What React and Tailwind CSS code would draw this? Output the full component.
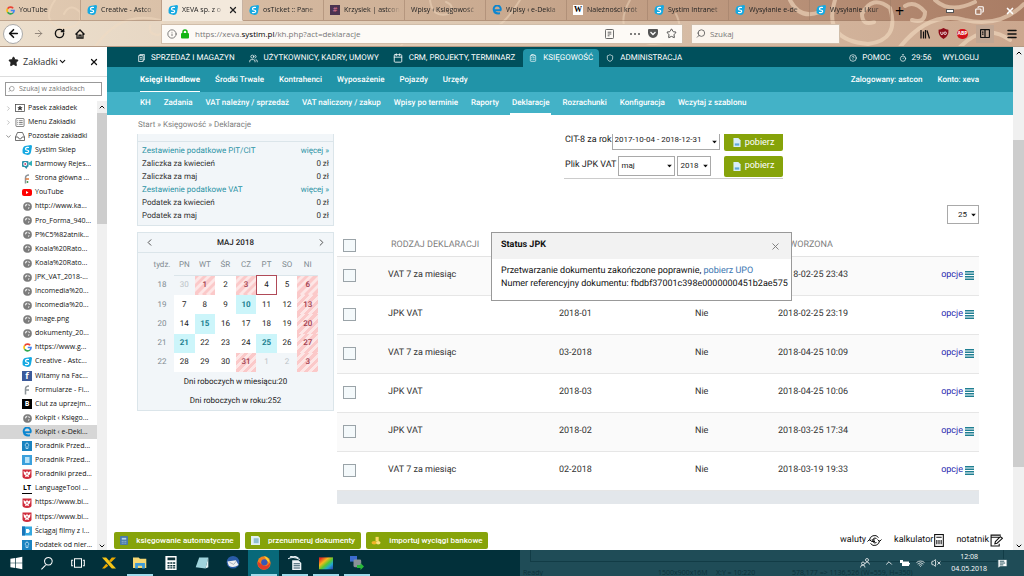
import {
  ArrowLeft, ArrowRight, Calendar, ChevronDown, ChevronLeft, ChevronRight, ChevronUp, CircleHelp, ClipboardList,
  Copy, Info, Menu, MessageSquareText, RotateCw, Search, Shield, Star, Timer, Users, VolumeX, Wifi, X,
} from 'lucide-react'

const tabs = [
  { label: 'YouTube', icon: 'google' },
  { label: 'Creative - Astco', icon: 'systim' },
  { label: 'XEVA sp. z o', icon: 'systim', active: true },
  { label: 'osTicket :: Pane', icon: 'systim' },
  { label: 'Krzysiek | astcon', icon: 'slack' },
  { label: 'Wpisy ‹ Księgowość' },
  { label: 'Wpisy ‹ e-Dekla', icon: 'edge' },
  { label: 'Należności krót', icon: 'wiki' },
  { label: 'Systim Intranet', icon: 'systim' },
  { label: 'Wysyłanie e-de', icon: 'systim' },
  { label: 'Wysyłanie i kur', icon: 'systim' },
]

const bookmarks = [
  ['systim', 'Systim Sklep'],
  ['camera', 'Darmowy Rejes...'],
  ['fcolor', 'Strona główna ...'],
  ['youtube', 'YouTube'],
  ['globe', 'http://www.ka...'],
  ['globe', 'Pro_Forma_940...'],
  ['globe', 'P%C5%82atnik...'],
  ['globe', 'Koala%20Rato...'],
  ['globe', 'Koala%20Rato...'],
  ['globe', 'JPK_VAT_2018-...'],
  ['globe', 'Incomedia%20...'],
  ['globe', 'Incomedia%20...'],
  ['globe', 'image.png'],
  ['globe', 'dokumenty_20...'],
  ['google', 'https://www.g...'],
  ['systim', 'Creative - Astc...'],
  ['facebook', 'Witamy na Fac...'],
  ['fgray', 'Formularze - Fi...'],
  ['bold', 'Ciut za uprzejm...'],
  ['globe', 'Kokpit ‹ Księgo...'],
  ['edge', 'Kokpit ‹ e-Dekl...'],
  ['bulb', 'Poradnik Przed...'],
  ['book', 'Poradnik Przed...'],
  ['eagle', 'Poradniki przed...'],
  ['lt', 'LanguageTool ...'],
  ['eagle', 'https://www.bi...'],
  ['eagle', 'https://www.bi...'],
  ['film', 'Ściągaj filmy z I...'],
  ['bulb', 'Podatek od nier...'],
]

const subNav = ['Środki Trwałe', 'Kontrahenci', 'Wyposażenie', 'Pojazdy', 'Urzędy']

const thirdNav = [
  'KH', 'Zadania', 'VAT należny / sprzedaż', 'VAT naliczony / zakup', 'Wpisy po terminie', 'Raporty', 'Deklaracje',
  'Rozrachunki', 'Konfiguracja', 'Wczytaj z szablonu',
]

const summary = [
  ['Zestawienie podatkowe PIT/CIT', 'więcej »', true],
  ['Zaliczka za kwiecień', '0 zł'],
  ['Zaliczka za maj', '0 zł'],
  ['Zestawienie podatkowe VAT', 'więcej »', true],
  ['Podatek za kwiecień', '0 zł'],
  ['Podatek za maj', '0 zł'],
]

const weekdays = ['PN', 'WT', 'ŚR', 'CZ', 'PT', 'SO', 'NI']

// o = other month, h = holiday, d = deadline, t = today
const weeks = [
  [18, ['30', 'o'], ['1', 'h'], ['2'], ['3', 'h'], ['4', 't'], ['5'], ['6', 'h']],
  [19, ['7'], ['8'], ['9'], ['10', 'd'], ['11'], ['12'], ['13', 'h']],
  [20, ['14'], ['15', 'd'], ['16'], ['17'], ['18'], ['19'], ['20', 'h']],
  [21, ['21', 'd'], ['22'], ['23'], ['24'], ['25', 'd'], ['26'], ['27', 'h']],
  [22, ['28'], ['29'], ['30'], ['31', 'h'], ['1', 'o'], ['2', 'o'], ['3', 'h']],
]

const dayStyles = {
  o: 'text-[#bcc3c7]',
  h: 'font-medium text-[#a04050] bg-[repeating-linear-gradient(135deg,#fbc9c9_0px,#fbc9c9_3px,#fde6e6_3px,#fde6e6_6px)]',
  d: 'bg-[#ccf5fa] font-bold text-[#1c8090]',
  t: 'bg-white outline outline-1 -outline-offset-1 outline-[#b04a58]',
}

const declarations = [
  ['VAT 7 za miesiąc', '', '', '2018-02-25 23:43'],
  ['JPK VAT', '2018-01', 'Nie', '2018-02-25 23:19'],
  ['VAT 7 za miesiąc', '03-2018', 'Nie', '2018-04-25 10:09'],
  ['JPK VAT', '2018-03', 'Nie', '2018-04-25 10:06'],
  ['JPK VAT', '2018-02', 'Nie', '2018-03-25 17:34'],
  ['VAT 7 za miesiąc', '02-2018', 'Nie', '2018-03-19 19:33'],
]

function SiteIcon({ name }) {
  const box = 'flex h-[10px] w-[10px] shrink-0 items-center justify-center'
  switch (name) {
    case 'systim':
      return (
        <svg viewBox="0 0 20 20" className="h-[10px] w-[10px] shrink-0">
          <path d="M6 2 L18 0 Q20 0 20 3 L18 14 Q17 20 11 20 L4 18 Q0 16 1 10 Q2 3 6 2Z" fill="#15a9e2" />
          <path d="M14 5 Q7 4 7 8 Q7 10 11 10.500 Q14 11 13 13.500 Q12 16 6 15" fill="none" stroke="#fff" strokeWidth="2.400" />
        </svg>
      )
    case 'google':
      return (
        <svg viewBox="0 0 20 20" className="h-[9px] w-[9px] shrink-0" fill="none" strokeWidth="3.500">
          <path d="M16 5 A8 8 0 0 0 3.500 6" stroke="#ea4335" />
          <path d="M3.500 6 A8 8 0 0 0 3.500 14" stroke="#fbbc05" />
          <path d="M3.500 14 A8 8 0 0 0 15.500 15.500" stroke="#34a853" />
          <path d="M15.500 15.500 A8 8 0 0 0 18 10 H10.500" stroke="#4285f4" />
        </svg>
      )
    case 'edge':
      return (
        <svg viewBox="0 0 20 20" className="h-[10px] w-[10px] shrink-0" fill="none" stroke="#0c86d0" strokeWidth="4">
          <path d="M4 10.500 H17 A7 7 0 1 0 4 11 Q5 18 16 16.500" />
        </svg>
      )
    case 'globe':
      return (
        <svg viewBox="0 0 20 20" className="h-[9px] w-[9px] shrink-0">
          <circle cx="10" cy="10" r="9" fill="#7c7c7c" stroke="#666" />
          <path d="M4 8 Q6 3 10 4 L9 7 L6 9 L7 12Z M12 4 L16 7 L15 9 L12 8Z M11 12 L15 12 L12 16Z" fill="#e8e8e8" />
        </svg>
      )
    case 'youtube':
      return (
        <svg viewBox="0 0 20 14" className="h-[7px] w-[10px] shrink-0">
          <rect width="20" height="14" rx="4" fill="#f00" />
          <path d="M8 4 L13 7 L8 10Z" fill="#fff" />
        </svg>
      )
    case 'camera':
      return (
        <svg viewBox="0 0 20 18" className="h-[9px] w-[10px] shrink-0">
          <rect y="2" width="13" height="12" rx="2" fill="#2b8fa8" />
          <path d="M13 6 L20 1 V12 L13 9Z" fill="#36b0b8" />
          <circle cx="6.500" cy="8" r="4" fill="#fff" />
          <circle cx="6.500" cy="8" r="2" fill="#c4446c" />
          <path d="M5 14 L9 18 L11 14Z" fill="#2b8fa8" />
        </svg>
      )
    case 'fcolor':
    case 'fgray':
      return (
        <svg viewBox="0 0 20 20" className="h-[10px] w-[10px] shrink-0" fill="none" strokeWidth="3">
          <path d="M7 19 V8 Q7 2 14 2" stroke="#8d9499" />
          <path d="M7 10 H14" stroke={name === 'fcolor' ? '#e07a3c' : '#8d9499'} />
          {name === 'fcolor' && <path d="M11 18 V14" stroke="#4e9a58" />}
        </svg>
      )
    case 'slack':
      return <span className={`${box} bg-[#4b3350] text-[7px] text-[#e07a9a]`}>#</span>
    case 'wiki':
      return <span className={`${box} bg-white font-['Liberation_Serif',serif] text-[8px] font-bold text-black`}>W</span>
    case 'facebook':
      return <span className={`${box} bg-[#3b5a9a] text-[9px] font-bold leading-[10px] text-white`}>f</span>
    case 'bold':
      return <span className={`${box} bg-black text-[7px] font-bold text-white`}>B</span>
    case 'lt':
      return <span className={`${box} border-b border-black text-[7px] font-bold text-black`}>LT</span>
    case 'bulb':
      return (
        <svg viewBox="0 0 20 20" className="h-[10px] w-[10px] shrink-0">
          <rect width="20" height="20" fill="#1a83c0" />
          <path d="M10 4 A4 4 0 0 1 12 11 V15 H8 V11 A4 4 0 0 1 10 4Z" fill="none" stroke="#d6effc" strokeWidth="1.500" />
        </svg>
      )
    case 'book':
      return (
        <svg viewBox="0 0 20 20" className="h-[10px] w-[10px] shrink-0">
          <rect width="20" height="20" fill="#3ba0dc" />
          <rect x="6" y="4" width="9" height="12" fill="#b8e2f8" />
        </svg>
      )
    case 'film':
      return (
        <svg viewBox="0 0 20 20" className="h-[10px] w-[10px] shrink-0">
          <rect y="1" width="20" height="18" fill="#35a8e0" />
          <path d="M0 1 H6 V19 H0Z" fill="#1b74b8" />
          <path d="M8 6 H13 L16 10 L13 14 H8Z" fill="#fff" />
        </svg>
      )
    default:
      return (
        <svg viewBox="0 0 20 20" className="h-[10px] w-[10px] shrink-0">
          <path d="M1 1 H19 V15 Q19 19 10 20 Q1 19 1 15Z" fill="#d02c3c" />
          <path d="M10 3 L12 7 L17 4 L16 11 L13 12 L14 16 L10 15 L6 16 L7 12 L4 11 L3 4 L8 7Z" fill="#fff" />
          <path d="M9 8 H11 V12 H9Z" fill="#d02c3c" />
        </svg>
      )
  }
}

function ThemeSwirls() {
  return (
    <svg
      viewBox="0 0 1024 47"
      preserveAspectRatio="xMaxYMin slice"
      className="pointer-events-none absolute inset-0 h-full w-full"
      fill="none"
      stroke="#f3dcc2"
      strokeLinecap="round"
    >
      <g strokeWidth="2" opacity="0.450">
        <path d="M55 0 Q40 22 62 28 Q84 28 80 12 Q70 2 64 14" />
        <path d="M95 47 Q120 10 160 20 Q172 30 158 35 Q148 34 150 26" />
        <path d="M430 0 Q432 18 448 14 Q456 6 446 2" />
        <path d="M400 47 Q420 20 450 30 Q490 50 520 0" />
        <path d="M630 0 Q610 35 650 44 Q690 44 676 14" />
      </g>
      <g strokeWidth="4" opacity="0.600">
        <path d="M835 0 Q822 40 868 44 Q900 40 890 8 Q872 -6 862 14 Q862 26 874 22" />
        <path d="M790 0 Q800 20 820 12 M900 47 Q930 10 965 20 Q1000 28 1024 4" />
        <path d="M905 6 Q915 0 925 12 Q925 24 912 20" />
        <path d="M960 47 Q985 22 1010 40" />
        <path d="M935 0 Q950 14 975 2" />
      </g>
    </svg>
  )
}

function BrowserChrome() {
  return (
    <header className="relative bg-linear-to-r from-[#ecdfcd] via-[#dcc6b0] to-[#cba78e] font-['Open_Sans',sans-serif] text-[8px] text-[#222]">
      <div className="absolute inset-x-0 top-0 h-[21px] bg-linear-to-r from-[#e2ccb4] via-[#c9a98f] to-[#a97c64]" />
      <ThemeSwirls />
      <div className="relative flex h-[21px]">
        {tabs.map((tab) => (
          <button
            key={tab.label}
            className={`flex w-[81px] items-center gap-1 border-r border-b border-[#9c7c66]/50 pl-[6px] pr-1 text-left text-[7px] ${tab.active ? 'border-b-transparent bg-[#f3e9dc]' : ''}`}
          >
            {tab.icon && <SiteIcon name={tab.icon} />}
            <span className="min-w-0 flex-1 whitespace-nowrap [mask-image:linear-gradient(to_right,black_75%,transparent)]">
              {tab.label}
            </span>
            {tab.active && <X size={10} strokeWidth={3} className="shrink-0" />}
          </button>
        ))}
        <button aria-label="Nowa karta" className="px-1 text-[16px] leading-[20px] text-black">+</button>
        <div className="ml-auto flex items-center gap-[21px] pr-[9px] text-white">
          <span className="h-[4px] w-[8px] border border-[#555] bg-white" />
          <Copy size={9} strokeWidth={3} className="-scale-x-100" />
          <X size={10} strokeWidth={4} />
        </div>
      </div>
      <div className="relative flex h-[26px] items-center border-b border-[#b59a84]">
        <div className="flex w-[161px] items-center gap-[10px] pl-[3px] text-[#111]">
          <button aria-label="Wstecz" className="flex h-5 w-5 items-center justify-center rounded-full border border-[#aaa] bg-white">
            <ArrowLeft size={13} strokeWidth={3} />
          </button>
          <ArrowRight size={11} strokeWidth={2} className="text-[#8a7f74]" />
          <RotateCw size={11} strokeWidth={3} />
          <svg viewBox="0 0 20 20" className="h-[10px] w-[10px]" fill="none" stroke="currentColor" strokeWidth="2.500">
            <path d="M1 11 L10 2 L19 11 M4 9 V18 H16 V9 M8 18 V12 H12 V18" />
          </svg>
        </div>
        <div className="flex h-5 min-w-0 flex-1 items-center gap-1 border border-[#d0bda9] bg-[#fdfaf6] px-[5px]">
          <Info size={10} className="text-[#666]" />
          <svg viewBox="0 0 16 20" className="h-[10px] w-[8px]">
            <rect y="8" width="16" height="11" rx="2" fill="#12b512" />
            <path d="M4 9 V6 Q4 2 8 2 Q12 2 12 6 V9" fill="none" stroke="#12b512" strokeWidth="3" />
          </svg>
          <p className="ml-[2px] flex-1 text-[#777]">
            https://xeva.<span className="text-black">systim.pl</span>/kh.php?act=deklaracje
          </p>
          <svg viewBox="0 0 20 22" className="h-[10px] w-[9px]" fill="none" stroke="#555" strokeWidth="2">
            <rect x="1" y="1" width="18" height="20" rx="2" />
            <path d="M6 7 H14 M6 11 H14 M6 15 H10" />
          </svg>
          <span className="ml-3 flex gap-[2px]">
            <i className="h-[2px] w-[2px] rounded-full bg-[#555]" />
            <i className="h-[2px] w-[2px] rounded-full bg-[#555]" />
            <i className="h-[2px] w-[2px] rounded-full bg-[#555]" />
          </span>
          <svg viewBox="0 0 20 18" className="ml-1 h-[9px] w-[10px]">
            <path d="M2 0 H18 Q20 0 20 2 V8 Q19 17 10 18 Q1 17 0 8 V2 Q0 0 2 0Z" fill="#555" />
            <path d="M5 6 L10 11 L15 6" fill="none" stroke="#fff" strokeWidth="2.500" />
          </svg>
          <Star size={11} className="ml-1 text-[#444]" />
        </div>
        <div className="ml-2 flex h-5 w-[149px] items-center gap-1 border border-[#d0bda9] bg-[#fbf5ee] px-1">
          <Search size={11} className="-scale-x-100 text-[#555]" />
          <input aria-label="Szukaj" placeholder="Szukaj" className="w-full bg-transparent outline-none placeholder:text-[#777]" />
        </div>
        <div className="flex w-[184px] items-center justify-end gap-2 pr-[6px] text-[#111]">
          <svg viewBox="0 0 20 20" className="h-[10px] w-[10px]" fill="none" stroke="currentColor" strokeWidth="2.500">
            <path d="M2 2 V19 M7 5 V19 M11 2 V19 M14 3 L19 19" />
          </svg>
          <svg viewBox="0 0 20 20" className="h-[11px] w-[11px]">
            <path d="M10 0 Q15 3 19 3 Q20 15 10 20 Q0 15 1 3 Q5 3 10 0Z" fill="#8c0c18" />
            <path d="M5 7 V10 Q5 12 7 12 Q9 12 9 10 V7" fill="none" stroke="#fff" strokeWidth="1.500" />
            <circle cx="13" cy="9.500" r="2.300" fill="none" stroke="#fff" strokeWidth="1.500" />
          </svg>
          <span className="flex h-[10px] w-[11px] items-center justify-center rounded-full bg-[#d3121a] text-[5px] font-bold text-white">
            ABP
          </span>
          <span className="flex h-[18px] w-[18px] items-center justify-center bg-[#c0a693]">
            <svg viewBox="0 0 20 18" className="h-[9px] w-[10px]" fill="none" stroke="currentColor" strokeWidth="2.500">
              <rect x="1" y="1" width="18" height="16" rx="2" />
              <path d="M10 1 V17 M4 6 H7 M4 10 H7" />
            </svg>
          </span>
          <Menu size={12} strokeWidth={3} className="ml-1" />
        </div>
      </div>
    </header>
  )
}

function Sidebar() {
  const folder = 'flex flex-1 items-center gap-[3px] whitespace-nowrap pl-[5px]'
  return (
    <aside className="flex w-[107px] shrink-0 flex-col bg-white font-['Open_Sans',sans-serif] text-[7px] text-[#111]">
      <div className="flex h-[30px] items-center border-b border-[#ddd] px-2">
        <Star size={11} fill="#222" className="text-[#222]" />
        <span className="ml-1 text-[9px] text-[#333]">Zakładki</span>
        <ChevronDown size={9} strokeWidth={3} />
        <button aria-label="Zamknij" className="ml-auto">
          <X size={10} strokeWidth={3} />
        </button>
      </div>
      <div className="mx-[5px] mt-[5px] mb-[5px] flex h-[14px] items-center gap-1 border border-[#999] px-[2px]">
        <Search size={8} className="-scale-x-100 text-[#777]" />
        <input
          aria-label="Szukaj w zakładkach"
          placeholder="Szukaj w zakładkach"
          className="w-full outline-none placeholder:text-[#777]"
        />
      </div>
      <div className="flex flex-1">
        <ul className="-mb-[2px] flex min-w-0 flex-1 flex-col">
          <li className={folder}>
            <ChevronRight size={7} className="text-[#999]" />
            <svg viewBox="0 0 20 16" className="h-[8px] w-[10px]" fill="none" stroke="#444" strokeWidth="1.500">
              <rect x="1" y="1" width="18" height="14" />
              <path d="M10 4 L11 7 H14 L12 9 L13 12 L10 10 L7 12 L8 9 L6 7 H9Z" fill="#222" />
            </svg>
            Pasek zakładek
          </li>
          <li className={folder}>
            <ChevronRight size={7} className="text-[#999]" />
            <svg viewBox="0 0 20 20" className="h-[9px] w-[10px]" fill="none" stroke="#444" strokeWidth="1.500">
              <rect x="1" y="1" width="18" height="18" rx="2" />
              <path d="M4 6 H6 M8 6 H16 M4 10 H6 M8 10 H16 M4 14 H6 M8 14 H16" />
            </svg>
            Menu Zakładki
          </li>
          <li className={folder}>
            <ChevronDown size={7} className="text-[#444]" />
            <svg viewBox="0 0 20 18" className="h-[9px] w-[10px]" fill="none" stroke="#444" strokeWidth="1.500">
              <path d="M5 1 H15 L19 10 V17 H1 V10Z M1 10 H6 Q7 14 10 14 Q13 14 14 10 H19" />
            </svg>
            Pozostałe zakładki
          </li>
          {bookmarks.map(([icon, label], i) => (
            <li key={i} className={`flex flex-1 items-center pl-[22px] ${icon === 'edge' ? 'bg-[#d6d6d6]' : ''}`}>
              <a href="#" className="flex items-center gap-[3px] whitespace-nowrap">
                <span className="flex w-[10px] justify-center"><SiteIcon name={icon} /></span>
                {label}
              </a>
            </li>
          ))}
        </ul>
        <div className="flex w-[10px] flex-col items-center bg-[#f0f0f0]">
          <ChevronUp size={8} strokeWidth={3} className="my-[2px]" />
          <div className="h-[111px] w-full bg-[#cdcdcd]" />
          <ChevronDown size={8} strokeWidth={3} className="mt-auto" />
        </div>
      </div>
    </aside>
  )
}

function AppHeader() {
  const top = 'flex items-center gap-[6px] whitespace-nowrap'
  return (
    <div className="font-medium text-white">
      <nav className="flex h-5 items-end bg-[#00505c] pl-[31px] pr-[34px] text-[8px] font-normal">
        <div className="flex h-[18px]">
          <a href="#" className={top}>
            <svg viewBox="0 0 16 20" className="h-[8px] w-[7px]" fill="none" stroke="currentColor" strokeWidth="2">
              <path d="M4 4 V1 H15 V15 H12 M1 4 H12 V19 H1Z M4 9 H9 M4 13 H9" />
            </svg>
            SPRZEDAŻ I MAGAZYN
          </a>
          <a href="#" className={`${top} ml-[14px]`}>
            <Users size={9} />
            UŻYTKOWNICY, KADRY, UMOWY
          </a>
          <a href="#" className={`${top} ml-[14px]`}>
            <Calendar size={10} />
            CRM, PROJEKTY, TERMINARZ
          </a>
          <a href="#" className={`${top} ml-2 rounded-t bg-[#2194a8] px-[6px]`}>
            <ClipboardList size={8} />
            KSIĘGOWOŚĆ
          </a>
          <a href="#" className={`${top} ml-[7px]`}>
            <Shield size={8} />
            ADMINISTRACJA
          </a>
        </div>
        <div className="ml-auto flex h-[18px] items-center">
          <a href="#" className="flex items-center gap-[5px]"><CircleHelp size={8} />POMOC</a>
          <span className="ml-2 flex items-center gap-[5px]"><Timer size={8} />29:56</span>
          <a href="#" className="ml-[11px]">WYLOGUJ</a>
        </div>
      </nav>
      <nav className="flex h-[25px] items-center gap-[15px] bg-[#2194a8] pl-[33px] pr-[34px] text-[8px]">
        <a href="#" className="flex h-full items-center border-b border-white pt-px font-bold">Księgi Handlowe</a>
        {subNav.map((item) => (
          <a key={item} href="#">{item}</a>
        ))}
        <span className="ml-auto">Zalogowany: astcon</span>
        <span>Konto: xeva</span>
      </nav>
      <nav className="flex h-[23px] items-center gap-[9px] bg-[#43b2c7] pl-[31px] text-[8px]">
        {thirdNav.map((item) => (
          <a
            key={item}
            href="#"
            className={`flex h-full items-center border-b-2 px-[2px] ${item === 'Deklaracje' ? 'border-white' : 'border-transparent'}`}
          >
            {item}
          </a>
        ))}
      </nav>
    </div>
  )
}

function TaxSummary() {
  return (
    <section className="border border-t-0 border-[#dbe5ea] bg-[#f2f6f9] pb-[3px]">
      <div className="mb-[2px] h-2 border-b border-[#dbe5ea]" />
      {summary.map(([name, value, link]) => (
        <div key={name} className={`flex h-[13px] items-center justify-between px-1 ${link ? 'text-[#2a93a5]' : 'text-[#333]'}`}>
          {link ? <a href="#">{name}</a> : <span>{name}</span>}
          {link ? <a href="#">{value}</a> : <span>{value}</span>}
        </div>
      ))}
    </section>
  )
}

function MonthCalendar() {
  return (
    <section className="mt-[6px] border border-[#dbe5ea] bg-[#f2f6f9] text-[#222]">
      <div className="flex h-5 items-center justify-between border-b border-[#dbe5ea] px-[6px]">
        <button aria-label="Poprzedni miesiąc"><ChevronLeft size={11} className="text-[#444]" /></button>
        <h2 className="font-medium">MAJ 2018</h2>
        <button aria-label="Następny miesiąc"><ChevronRight size={11} className="text-[#444]" /></button>
      </div>
      <table className="ml-3 mt-[2px] h-[117px] w-[168px] table-fixed text-center">
        <thead>
          <tr className="h-5 text-[#808a90]">
            <th className="w-6 font-normal">tydz.</th>
            {weekdays.map((day) => (
              <th key={day} className="border-b border-[#dbe5ea] font-normal">{day}</th>
            ))}
          </tr>
        </thead>
        <tbody>
          {weeks.map(([week, ...days]) => (
            <tr key={week}>
              <td className="text-[#808a90]">{week}</td>
              {days.map(([day, kind]) => (
                <td key={day} className={kind ? dayStyles[kind] : 'bg-white'}>{day}</td>
              ))}
            </tr>
          ))}
        </tbody>
      </table>
      <p className="h-[19px] text-center leading-[19px]">Dni roboczych w miesiącu:20</p>
      <p className="h-[19px] text-center leading-[19px]">Dni roboczych w roku:252</p>
    </section>
  )
}

function Dropdown({ id, value, label, className }) {
  return (
    <span className={`relative flex shrink-0 border border-[#a9a9a9] bg-white ${className}`}>
      <select id={id} aria-label={label} className="w-full appearance-none bg-transparent pl-[2px] text-[8px] text-[#222] outline-none">
        <option>{value}</option>
      </select>
      <svg viewBox="0 0 10 6" className="pointer-events-none absolute right-[2px] top-1/2 h-[3px] w-[5px] -translate-y-1/2">
        <path d="M0 0 H10 L5 6Z" fill="#111" />
      </svg>
    </span>
  )
}

function DownloadButton({ className }) {
  return (
    <button className={`ml-auto flex w-[59px] shrink-0 items-center justify-center gap-1 bg-[#86a30a] text-white ${className}`}>
      <svg viewBox="0 0 18 20" className="h-[9px] w-[8px]">
        <path d="M1 0 H12 L17 5 V20 H1Z" fill="#d8edf8" />
        <path d="M4 12 H14 V17 H4Z" fill="#5fa8d8" />
      </svg>
      pobierz
    </button>
  )
}

function DownloadForm() {
  return (
    <form className="ml-[227px] w-[219px] whitespace-nowrap border-b border-[#ccc] pl-px text-[9px] text-[#222]">
      <div className="flex items-start">
        <label htmlFor="cit-year" className="leading-3">CIT-8 za rok</label>
        <Dropdown id="cit-year" value="2017-10-04 - 2018-12-31" className="h-4 w-[108px] border-t-0 pb-1" />
        <DownloadButton className="h-[17px] rounded-b-xs" />
      </div>
      <div className="mt-[3px] flex h-6 items-center gap-[2px]">
        <label htmlFor="jpk-month">Plik JPK VAT</label>
        <Dropdown id="jpk-month" value="maj" className="h-5 w-[57px]" />
        <Dropdown label="Rok" value="2018" className="h-5 w-[34px]" />
        <DownloadButton className="h-[21px] rounded-xs" />
      </div>
    </form>
  )
}

const checkbox = 'block h-[13px] w-[13px] appearance-none border border-[#9aa3a8] bg-[#f4f9fb]'

function DeclarationsTable() {
  return (
    <table className="mt-3 w-full table-fixed text-left text-[9px] text-[#333]">
      <colgroup>
        <col className="w-[51px]" />
        <col className="w-[171px]" />
        <col className="w-[136px]" />
        <col className="w-[83px]" />
        <col />
        <col className="w-[60px]" />
      </colgroup>
      <thead>
        <tr className="h-5 border-b border-[#e3e3e3] text-[#808080]">
          <th className="pl-[6px]"><input type="checkbox" aria-label="Zaznacz wszystkie" className={checkbox} /></th>
          <th className="pl-[3px] font-normal">RODZAJ DEKLARACJI</th>
          <th />
          <th />
          <th className="font-normal">UTWORZONA</th>
          <th />
        </tr>
      </thead>
      <tbody>
        {declarations.map(([kind, period, correction, created]) => (
          <tr key={created} className="h-[39px] border-b border-[#e6e6e6] odd:bg-[#fafafa]">
            <td className="pl-[6px]"><input type="checkbox" aria-label={`${kind} ${created}`} className={checkbox} /></td>
            <td>{kind}</td>
            <td>{period}</td>
            <td>{correction}</td>
            <td>{created}</td>
            <td className="pr-[5px]">
              <a href="#" className="flex items-center justify-end gap-[2px] text-[#2a2ab0]">
                opcje
                <svg viewBox="0 0 9 9" className="h-[9px] w-[9px]" fill="#1f7f92">
                  <path d="M0 0 H9 V1.500 H0Z M0 2.500 H9 V4 H0Z M0 5 H9 V6.500 H0Z M0 7.500 H9 V9 H0Z" />
                </svg>
              </a>
            </td>
          </tr>
        ))}
      </tbody>
      <tfoot>
        <tr className="h-[14px] bg-[#e3e7eb]"><td colSpan={6} /></tr>
      </tfoot>
    </table>
  )
}

function StatusDialog() {
  return (
    <div role="dialog" aria-label="Status JPK" className="absolute left-[154px] top-[98px] w-[301px] border border-[#999] bg-white text-[9px] text-[#111]">
      <div className="flex h-[26px] items-center justify-between bg-[#f2f2f2] pl-[9px] pr-[10px]">
        <h2 className="font-bold">Status JPK</h2>
        <button aria-label="Zamknij"><X size={11} className="text-[#777]" /></button>
      </div>
      <div className="h-[41px] whitespace-nowrap py-[6px] pl-[9px] leading-[13px]">
        <p>Przetwarzanie dokumentu zakończone poprawnie, <a href="#" className="text-[#3a75b0]">pobierz UPO</a></p>
        <p>Numer referencyjny dokumentu: fbdbf37001c398e0000000451b2ae575</p>
      </div>
    </div>
  )
}

function AppFooter() {
  const action = 'flex h-[17px] items-center justify-center gap-2 rounded-xs bg-[#86a30a] text-white'
  return (
    <footer className="mt-auto flex items-center pb-px pl-[7px] pr-[10px] text-[8px] font-medium">
      <div className="flex gap-[5px]">
        <button className={`${action} w-[126px]`}>
          <svg viewBox="0 0 18 20" className="h-[9px] w-[8px]">
            <rect width="18" height="20" rx="2" fill="#4a7ba8" />
            <path d="M4 4 H14 V8 H4Z" fill="#b8d4e8" />
            <path d="M4 12 H14 M4 16 H14" stroke="#b8d4e8" strokeWidth="2" strokeDasharray="2 2" />
          </svg>
          księgowanie automatyczne
        </button>
        <button className={`${action} w-[116px]`}>
          <svg viewBox="0 0 20 20" className="h-[9px] w-[9px]">
            <path d="M0 0 H16 L20 4 V20 H0Z" fill="#e2f0f4" />
            <path d="M6 5 H17 V16 H6Z" fill="#8fbfd0" />
          </svg>
          przenumeruj dokumenty
        </button>
        <button className={`${action} w-[122px]`}>
          <svg viewBox="0 0 20 20" className="h-[9px] w-[10px]">
            <path d="M9 2 H16 V12 H9Z" fill="#f8d860" />
            <ellipse cx="6" cy="15" rx="6" ry="4" fill="#f0b428" />
            <ellipse cx="15" cy="15" rx="5" ry="4" fill="#fbe080" />
          </svg>
          importuj wyciągi bankowe
        </button>
      </div>
      <div className="ml-auto flex gap-3 text-[9px] font-normal text-[#111]">
        <a href="#" className="flex items-center gap-px">
          waluty
          <svg viewBox="0 0 30 26" className="h-[13px] w-[15px]" fill="none" stroke="#111" strokeWidth="2">
            <path d="M5 13 A10 10 0 0 1 23 7 M25 13 A10 10 0 0 1 7 19 M1 15 L5 11 L9 15 M21 11 L25 15 L29 11" />
            <path d="M19 9 Q12 6 12 13 Q12 20 19 17 M9 12 H16 M9 15 H16" />
          </svg>
        </a>
        <a href="#" className="flex items-center gap-px">
          kalkulator
          <svg viewBox="0 0 18 24" className="h-[13px] w-[10px]" fill="none" stroke="#111" strokeWidth="2">
            <rect x="1" y="1" width="16" height="22" />
            <path d="M4 6 H14 M5 11 V19 M9 11 V19 M13 11 V19" />
          </svg>
        </a>
        <a href="#" className="flex items-center gap-px">
          notatnik
          <svg viewBox="0 0 24 24" className="h-[13px] w-[13px]" fill="none" stroke="#111" strokeWidth="2">
            <path d="M17 18 V22 H2 V2 H20 M2 6 H17 M9 18 L10 14 L19 5 L23 8 L13 17Z" />
          </svg>
        </a>
      </div>
    </footer>
  )
}

const taskIcons = [
  { name: 'Start', art: <path d="M2 4 L9 3 V9.500 H2Z M10 3 L19 1 V9.500 H10Z M2 10.500 H9 V17 L2 16Z M10 10.500 H19 V19 L10 17Z" fill="#fff" /> },
  { name: 'Wyszukaj', art: <path d="M8 13 L2 19 M12 2 A5.500 5.500 0 1 1 11.900 2Z" fill="none" stroke="#fff" strokeWidth="1.500" /> },
  { name: 'Widok zadań', art: <path d="M5 4 H15 V16 H5Z M3 6 H1 V14 H3 M17 6 H19 V14 H17" fill="none" stroke="#fff" strokeWidth="1.500" /> },
  { name: 'XnView', art: <><path d="M0 2 H6 L20 18 H14Z" fill="#f5c518" /><path d="M14 2 H20 L13 9 L10 7Z M6 11 L9 14 L4 18 H0Z" fill="#e8a800" /></> },
  { name: 'Eksplorator', open: true, art: <><path d="M0 2 H8 L10 4 H19 V17 H0Z" fill="#f6d873" /><path d="M3 10 H17 V18 H13 V14 H7 V18 H3Z" fill="#3f9bd8" /></> },
  { name: 'Kalkulator', art: <><rect x="2" width="16" height="20" fill="#fff" /><path d="M5 2 H16 V6 H5Z M5 9 H8 V11 H5Z M9 9 H12 V11 H9Z M13 9 H16 V11 H13Z M5 13 H8 V15 H5Z M9 13 H12 V15 H9Z M13 13 H16 V15 H13Z M5 16 H8 V18 H5Z M9 16 H12 V18 H9Z M13 16 H16 V18 H13Z" fill="#0a3038" /></> },
  { name: 'Notatnik', art: <><path d="M6 2 H19 L15 18 L1 16Z" fill="#9fd4dc" /><path d="M15 18 L19 2 V16Z" fill="#e4f4f6" /></> },
  { name: 'Thunderbird', art: <><circle cx="10" cy="9" r="9" fill="#2a5ca8" /><path d="M2 8 L14 6 L18 13 Q10 18 4 14Z" fill="#f0f0f0" /><path d="M5 9 L11 12 L15 7" fill="none" stroke="#8898a8" /></> },
  { name: 'Firefox', open: true, active: true, art: <><circle cx="10" cy="10" r="9.500" fill="#f08020" /><path d="M1 8 Q0 19 10 19.500 Q19 19 19 9 Q14 17 8 13Z" fill="#e03c28" /><circle cx="10.500" cy="9" r="4.500" fill="#3458b8" /><path d="M10 0 Q18 2 18 10 L14 6Z" fill="#fcd030" /></> },
  { name: 'Writer', open: true, art: <><path d="M6 6 H15 L19 10 V20 H6Z" fill="#eef4f8" /><path d="M8 11 H17 M8 14 H17 M8 17 H17" stroke="#356" strokeWidth="1.500" /><path d="M0 4 Q8 0 17 5 M3 1 Q10 -1 15 3" stroke="#e8f0f4" strokeWidth="1.500" fill="none" /></> },
  { name: 'Obrazy', open: true, art: <><defs><linearGradient id="rainbow" x1="0" y1="0" x2="1" y2="1"><stop offset="0.100" stopColor="#e42c20" /><stop offset="0.350" stopColor="#f4b820" /><stop offset="0.550" stopColor="#58c830" /><stop offset="0.750" stopColor="#20a8d0" /><stop offset="1" stopColor="#3038b0" /></linearGradient></defs><rect y="2" width="20" height="17" fill="url(#rainbow)" /></> },
  { name: 'PuTTY', open: true, art: <><rect width="10" height="8" fill="#3c6cd0" /><rect x="5" y="5" width="11" height="11" rx="2" fill="#8a9298" /><path d="M10 13 H15 V10 L20 15 L15 20 V17 H10Z" fill="#28b838" /></> },
]

function Taskbar() {
  return (
    <div className="relative flex h-[26px] shrink-0 bg-[#02303a] font-['Open_Sans',sans-serif] text-[7px] text-white">
      {taskIcons.map((task) => (
        <button
          key={task.name}
          aria-label={task.name}
          className={`flex w-[31px] flex-col items-center justify-between pt-[6px] ${task.active ? 'bg-[#08697a]' : ''}`}
        >
          <svg viewBox="0 0 20 20" className="h-[14px] w-[14px]">{task.art}</svg>
          {task.open && <span className="h-[2px] w-[26px] bg-[#9fdcec]" />}
        </button>
      ))}
      <div className="relative ml-auto flex w-[504px] justify-end bg-[#1f4c57]">
        {/* window showing through the translucent bar */}
        <div className="absolute inset-x-0 bottom-0 flex pl-[3px] leading-[7px] whitespace-nowrap text-[#0c313a]">
          <span className="w-[135px]">Ready</span>
          <span className="w-[58px]">1500x900x16M</span>
          <span className="w-[76px]">X:Y = 10:220</span>
          <span>578,177 =&gt; 1136,526 (W=559, H=350)</span>
        </div>
        <div className="absolute top-0 right-5 left-[10px] h-3 border-x border-b border-[#123c46]" />
        <div className="relative flex items-center gap-[6px] pr-4">
          <svg viewBox="0 0 20 20" className="h-[10px] w-[10px]" fill="none" stroke="#fff" strokeWidth="1.500">
            <circle cx="6" cy="11" r="3" />
            <circle cx="14" cy="4" r="3" />
            <path d="M1 19 Q1 14 6 14 Q10 14 10 19 M10 12 Q11 8 14 8 Q18 8 19 13" />
          </svg>
          <ChevronUp size={10} className="ml-2" />
          <svg viewBox="0 0 20 14" className="h-[7px] w-[10px]">
            <path d="M4 3 H18 V12 H4Z M18 6 H20 V9 H18Z M0 0 H6 V6 H0Z" fill="#fff" />
          </svg>
          <Wifi size={9} />
          <VolumeX size={10} />
          <div className="ml-1 text-center leading-3">
            <p>12:08</p>
            <p>04.05.2018</p>
          </div>
          <MessageSquareText size={11} className="ml-1" fill="#fff" stroke="#1f4c57" />
        </div>
      </div>
    </div>
  )
}

export default function App() {
  return (
    <div className="flex min-h-screen flex-col bg-white">
      <BrowserChrome />
      <div className="flex flex-1">
        <Sidebar />
        <main className="flex min-w-0 flex-1 flex-col font-['Roboto',sans-serif] [text-rendering:geometricPrecision]">
          <AppHeader />
          <p className="pl-[31px] text-[8px] leading-[19px] text-[#808080]">
            <a href="#">Start</a> » <a href="#">Księgowość</a> » <a href="#">Deklaracje</a>
          </p>
          <div className="flex gap-[3px] pl-[30px] pr-[34px]">
            <div className="w-[197px] shrink-0 text-[8px]">
              <TaxSummary />
              <MonthCalendar />
            </div>
            <div className="relative min-w-0 flex-1">
              <DownloadForm />
              <div className="mt-[26px] flex justify-end text-[8px] text-[#222]">
                <Dropdown label="Liczba wierszy" value="25" className="h-[19px] w-8 pl-2" />
              </div>
              <DeclarationsTable />
              <StatusDialog />
            </div>
          </div>
          <AppFooter />
        </main>
        <div className="flex w-[11px] flex-col items-center bg-[#f0f0f0]">
          <ChevronUp size={8} strokeWidth={3} className="mt-[2px] mb-[83px]" />
          <div className="h-[327px] w-full bg-[#cdcdcd]" />
          <ChevronDown size={8} strokeWidth={3} className="mt-auto" />
        </div>
      </div>
      <Taskbar />
    </div>
  )
}
